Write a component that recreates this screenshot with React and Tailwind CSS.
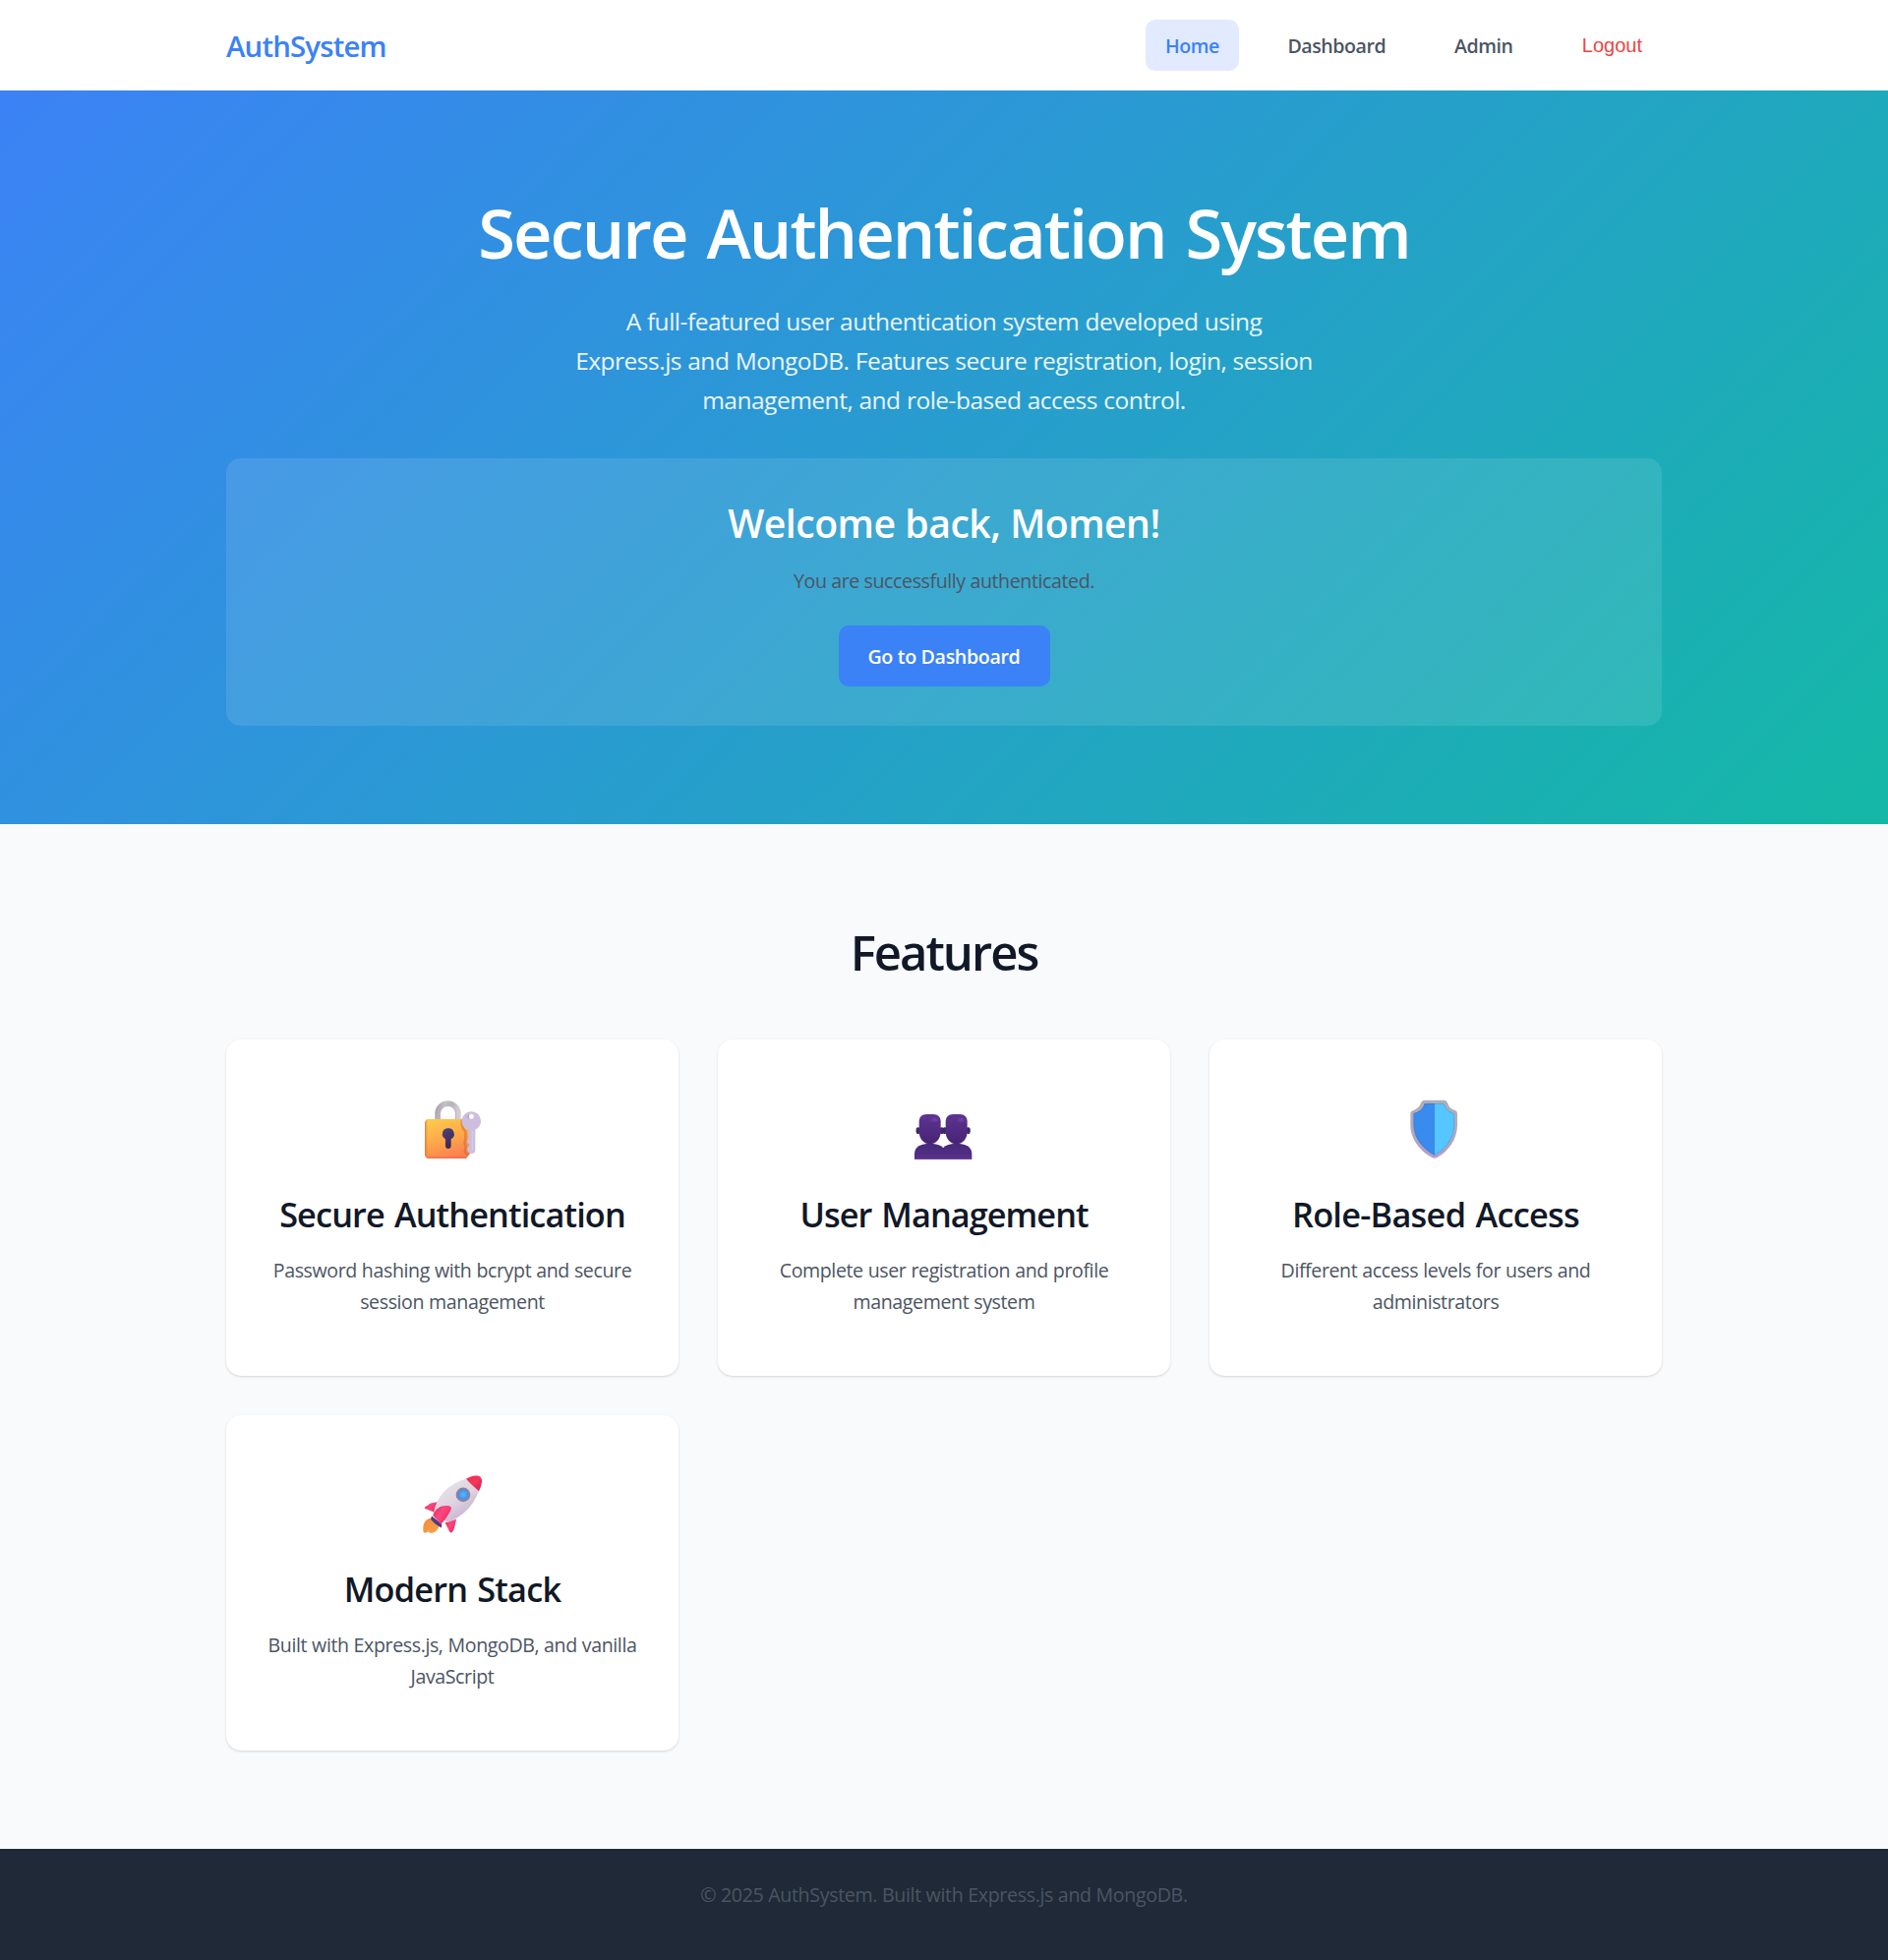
function LockIcon() {
  return (
    <svg viewBox="60 54 180 180" className="h-[60px] w-[60px]">
      <defs>
        <linearGradient id="lockBody" x1="0.3" y1="0" x2="0.65" y2="1">
          <stop offset="0" stopColor="#ffc84c" />
          <stop offset="0.5" stopColor="#fea84a" />
          <stop offset="1" stopColor="#fb7d50" />
        </linearGradient>
        <linearGradient id="lockSide" x1="0" y1="0" x2="1" y2="0">
          <stop offset="0" stopColor="#c9703c" stopOpacity="0.75" />
          <stop offset="1" stopColor="#e08a3c" stopOpacity="0" />
        </linearGradient>
        <linearGradient id="shackle" x1="0" y1="0" x2="1" y2="0.2">
          <stop offset="0" stopColor="#a8a5ac" />
          <stop offset="0.35" stopColor="#c4c2c6" />
          <stop offset="0.7" stopColor="#b6b4ba" />
          <stop offset="1" stopColor="#cfcdd0" />
        </linearGradient>
        <linearGradient id="keyhole" x1="0" y1="0" x2="0.5" y2="1">
          <stop offset="0" stopColor="#4c4684" />
          <stop offset="1" stopColor="#40264f" />
        </linearGradient>
        <clipPath id="lockClip">
          <path d="M80 113 H192 Q206 113 206 127 V216 L192 234 H80 Q66 234 66 220 V127 Q66 113 80 113 Z" />
        </clipPath>
      </defs>
      <path d="M105 120 V97 A31.5 31.5 0 0 1 168 97 V120" fill="none" stroke="url(#shackle)" strokeWidth="16" />
      <path d="M112.500 116 V97 A24 24 0 0 1 160.500 97 V116" fill="none" stroke="#b99ccd" strokeWidth="3" opacity="0.8" />
      <g clipPath="url(#lockClip)">
        <rect x="66" y="113" width="140" height="121" fill="url(#lockBody)" />
        <rect x="66" y="113" width="10" height="121" fill="url(#lockSide)" />
        <rect x="66" y="229" width="140" height="5" fill="#f0614e" opacity="0.55" />
        <path d="M180 112 C176 135 184 146 190 152 V176 L187 186 L191 198 L188 212 C190 222 200 224 206 220" fill="none" stroke="#c26a2e" strokeWidth="7" opacity="0.5" />
      </g>
      <path d="M136.500 142 A17.500 17.500 0 0 0 129 175 V195 A8.500 9 0 0 0 146 195 V175 A17.500 17.500 0 0 0 136.500 142 Z" fill="url(#keyhole)" />
      <path
        fillRule="evenodd"
        d="M208 91 C224 91 237 104 237 120 C237 132 230 141 220 146 V211 C220 216 215 219 209 219 C202 219 196 215 196 208 V200 L201 196 V190 L196 186 V178 L199 174 V147 C187 143 179 133 179 120 C179 104 192 91 208 91 Z M208 98 A7.500 7.500 0 1 0 208 113 A7.500 7.500 0 1 0 208 98 Z"
        fill="#cdbede"
      />
      <path d="M211 150 V209" stroke="#e0d5ea" strokeWidth="3" opacity="0.7" />
      <path d="M200 112 A9 9 0 0 1 200 100" stroke="#9f8fb5" strokeWidth="3" fill="none" />
    </svg>
  );
}

function UsersIcon() {
  const person = (
    <>
      <ellipse cx="71" cy="149" rx="6.500" ry="10" fill="#45246f" />
      <ellipse cx="143" cy="149" rx="6.500" ry="10" fill="#45246f" />
      <path d="M60 237 V219 C60 198 80 188 107 188 C134 188 154 198 154 219 V237 Z" fill="url(#torso)" />
      <path d="M97 99 H117 C132 99 140 108 140 122 V151 C140 176 125 190 107 190 C89 190 74 176 74 151 V122 C74 108 82 99 97 99 Z" fill="url(#head)" />
      <ellipse cx="121" cy="116" rx="14" ry="9" fill="url(#sheen)" />
    </>
  );
  return (
    <svg viewBox="60 54 180 183" className="h-[61px] w-[60px]">
      <defs>
        <linearGradient id="torso" x1="0" y1="0" x2="0" y2="1">
          <stop offset="0" stopColor="#472878" />
          <stop offset="0.9" stopColor="#56308a" />
          <stop offset="1" stopColor="#7450a2" />
        </linearGradient>
        <linearGradient id="head" x1="0" y1="0" x2="0" y2="1">
          <stop offset="0" stopColor="#5d3592" />
          <stop offset="0.6" stopColor="#50297f" />
          <stop offset="1" stopColor="#472374" />
        </linearGradient>
        <radialGradient id="sheen">
          <stop offset="0" stopColor="#7a4fae" stopOpacity="0.7" />
          <stop offset="1" stopColor="#7a4fae" stopOpacity="0" />
        </radialGradient>
      </defs>
      <g transform="translate(81 0)">{person}</g>
      {person}
    </svg>
  );
}

function ShieldIcon() {
  return (
    <svg viewBox="60 54 180 180" className="h-[60px] w-[60px]">
      <defs>
        <linearGradient id="rim" x1="0" y1="0" x2="0" y2="1">
          <stop offset="0" stopColor="#b1adb8" />
          <stop offset="0.6" stopColor="#b0a8bc" />
          <stop offset="1" stopColor="#b79bc8" />
        </linearGradient>
      </defs>
      <path d="M117 56 H175 C183 56 185 61 188 69 C192 79 199 84 208 87 C214 89 216 92 216 98 V133 C216 176 188 214 154 231 C149 234 144 234 139 231 C105 214 73 176 73 133 V98 C73 92 76 89 82 87 C91 84 99 79 103 69 C106 61 109 56 117 56 Z" fill="url(#rim)" />
      <path d="M147 66 H176 C180 82 190 92 207 96 V133 C207 172 180 207 147 224 Z" fill="#55c6ff" />
      <path d="M147 66 H116 C112 82 101 92 83 96 V133 C83 172 113 207 147 224 Z" fill="#3a8bee" />
      <path d="M147 67.500 H117 C113 83 102 93 84 97 V133 C84 171 113 206 147 223" fill="none" stroke="#2f78d6" strokeWidth="3" opacity="0.6" />
      <path d="M147 67.500 H175 C179 83 189 93 206 97 V133 C206 171 180 206 147 223" fill="none" stroke="#3f9fe0" strokeWidth="3" opacity="0.6" />
    </svg>
  );
}

function RocketIcon() {
  return (
    <svg viewBox="60 58.500 180 180" className="h-[60px] w-[60px]">
      <defs>
        <linearGradient id="hull" x1="0.25" y1="0.2" x2="0.7" y2="0.85">
          <stop offset="0" stopColor="#e6e0e6" />
          <stop offset="0.5" stopColor="#ded3e0" />
          <stop offset="1" stopColor="#c9b4d2" />
        </linearGradient>
        <linearGradient id="fin" x1="0" y1="0" x2="1" y2="0.6">
          <stop offset="0" stopColor="#e02a56" />
          <stop offset="0.5" stopColor="#f9497f" />
          <stop offset="1" stopColor="#f12a63" />
        </linearGradient>
        <linearGradient id="nose" x1="0" y1="0" x2="1" y2="1">
          <stop offset="0" stopColor="#ee2c4e" />
          <stop offset="0.5" stopColor="#f3365c" />
          <stop offset="1" stopColor="#cf1f48" />
        </linearGradient>
        <linearGradient id="flame" x1="0" y1="0" x2="1" y2="1">
          <stop offset="0" stopColor="#f08a3a" />
          <stop offset="1" stopColor="#ffa548" />
        </linearGradient>
        <radialGradient id="porthole">
          <stop offset="0" stopColor="#62b8ff" />
          <stop offset="1" stopColor="#3d8df0" />
        </radialGradient>
      </defs>
      <path d="M86 190 C70 191 61 205 61 220 C60 228 62 236 66 235 C70 234 73 231 77 231 C80 233 84 236 89 235 C100 231 108 224 110 212 Z" fill="url(#flame)" />
      <path d="M105 140 L88 143 C82 144 79 147 76 150 L67 155 C65 157 66 160 69 161 L95 172 Z" fill="url(#fin)" />
      <path d="M162 193 L157 216 C156 222 153 227 150 232 C148 235 144 235 142 232 L128 204 Z" fill="url(#fin)" />
      <path d="M87 183 L118 208 L117 219 C104 213 92 204 84 193 Z" fill="#4a3d84" />
      <path d="M192 70 L231 107 C214 151 184 184 135 203 L94 170 C104 117 142 84 192 70 Z" fill="url(#hull)" />
      <path d="M192 70 C204 62 219 58 229 61 C237 63 241 70 240 78 C239 88 236 98 231 107 C218 97 203 83 192 70 Z" fill="url(#nose)" />
      <path d="M91 182 C93 170 103 160 116 154 C126 150 138 151 144 154 C148 157 147 162 144 167 C136 183 125 199 115 208 Z" fill="url(#fin)" />
      <circle cx="183" cy="118" r="22" fill="#8c8598" />
      <circle cx="183" cy="118" r="16" fill="url(#porthole)" />
    </svg>
  );
}

const features = [
  { Icon: LockIcon, title: "Secure Authentication", track: "tracking-[-0.88px]", lines: ["Password hashing with bcrypt and secure", "session management"] },
  { Icon: UsersIcon, title: "User Management", track: "tracking-[-0.95px]", lines: ["Complete user registration and profile", "management system"] },
  { Icon: ShieldIcon, title: "Role-Based Access", track: "tracking-[-0.72px]", lines: ["Different access levels for users and", "administrators"] },
  { Icon: RocketIcon, title: "Modern Stack", track: "tracking-[-0.8px]", lines: ["Built with Express.js, MongoDB, and vanilla", "JavaScript"] },
];

function Lines({ lines }) {
  return lines.map((line) => (
    <span key={line} className="block whitespace-nowrap">
      {line}{" "}
    </span>
  ));
}

export default function App() {
  return (
    <div className="flex min-h-[1993px] flex-col bg-[#f9fafb] font-['Open_Sans','Noto_Sans',sans-serif] text-[19.6px] leading-8 text-[#4b5563]">
      <header className="h-[92px] bg-white">
        <div className="mx-auto flex h-full w-[1460px] items-center justify-between">
          <a className="pt-px text-[29.4px] leading-[46px] font-semibold tracking-[-0.85px] text-[#3b82f6]">AuthSystem</a>
          <nav className="flex items-center gap-[30px] text-center font-semibold tracking-[-0.45px]">
            <a className="w-[95px] rounded-[10px] bg-[#e1eaff] pt-[11px] pb-[9px] text-[#3b82f6]">Home</a>
            <a className="w-[139px] pt-[11px] pb-[9px]">Dashboard</a>
            <a className="w-[100px] pt-[11px] pb-[9px]">Admin</a>
            <button className="px-5 font-['Liberation_Sans',Arial,sans-serif] text-[20px] leading-[23px] font-normal tracking-normal text-[#ef4444]">Logout</button>
          </nav>
        </div>
      </header>

      <section className="bg-[linear-gradient(135deg,#3b82f6_0%,#14b8a6_100%)] pt-[103px] pb-[99.5px] text-center">
        <h1 className="mb-[28px] text-[68.6px] leading-[84px] font-semibold tracking-[-1.95px] text-white [word-spacing:4px]">Secure Authentication System</h1>
        <p className="mb-[39px] text-[24.5px] leading-10 tracking-[-0.5px] text-white/90 [word-spacing:0.4px]">
          <Lines
            lines={[
              "A full-featured user authentication system developed using",
              "Express.js and MongoDB. Features secure registration, login, session",
              "management, and role-based access control.",
            ]}
          />
        </p>
        <div className="mx-auto w-[1460px] rounded-[15px] bg-white/10 p-10">
          <h2 className="mb-[20px] pt-[2px] text-[39.2px] leading-[47px] font-semibold tracking-[-0.5px] text-white">Welcome back, Momen!</h2>
          <p className="mb-[29px] tracking-[-0.41px]">You are successfully authenticated.</p>
          <a className="mx-auto block w-[215px] rounded-[10px] bg-[#3b82f6] pt-4 pb-[14px] font-semibold tracking-[-0.33px] text-white">Go to Dashboard</a>
        </div>
      </section>

      <section className="pt-[99.5px] pb-[100px] text-center">
        <h2 className="mb-[59px] pt-[2px] text-[49px] leading-[59px] font-semibold tracking-[-2px] text-[#111827]">Features</h2>
        <div className="mx-auto grid w-[1460px] grid-cols-3 gap-10">
          {features.map(({ Icon, title, track, lines }) => (
            <article key={title} className="h-[341.5px] rounded-[15px] bg-white p-10 shadow-[0_1px_3px_rgba(0,0,0,0.1),0_1px_2px_rgba(0,0,0,0.06)]">
              <div className="mb-[20.7px] flex h-24 items-start justify-center pt-[21px]">
                <Icon />
              </div>
              <h3 className={`mb-5 text-[34.3px] leading-[42px] font-semibold text-[#111827] [word-spacing:2px] ${track}`}>{title}</h3>
              <p className="tracking-[-0.4px] [word-spacing:0.3px]">
                <Lines lines={lines} />
              </p>
            </article>
          ))}
        </div>
      </section>

      <footer className="flex-1 bg-[#1f2937] pt-[31px] text-center">
        <p className="tracking-[-0.33px]">© 2025 AuthSystem. Built with Express.js and MongoDB.</p>
      </footer>
    </div>
  );
}
